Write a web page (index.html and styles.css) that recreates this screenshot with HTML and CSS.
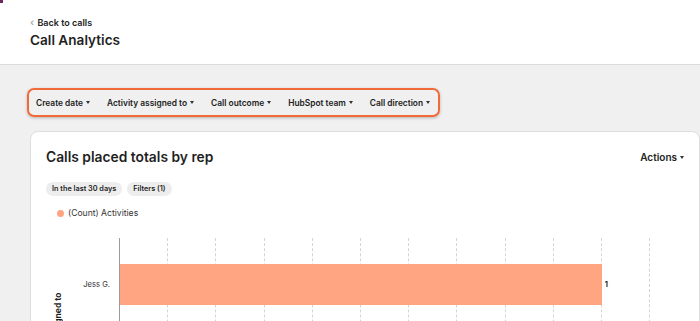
FILE: index.html
```html
<!DOCTYPE html>
<html lang="en">
<head>
    <meta charset="UTF-8">
    <meta name="viewport" content="width=device-width, initial-scale=1.0">
    <title>Call Analytics</title>
    <link rel="stylesheet" href="styles.css">
</head>
<body>
    <span class="corner-mark"></span>
    <header class="page-header">
        <a class="back-link" href="#"><span class="chev">&#8249;</span> Back to calls</a>
        <h1>Call Analytics</h1>
    </header>

    <main class="content">
        <div class="filter-bar">
            <button class="filter">Create date <span class="caret"></span></button>
            <button class="filter">Activity assigned to <span class="caret"></span></button>
            <button class="filter">Call outcome <span class="caret"></span></button>
            <button class="filter">HubSpot team <span class="caret"></span></button>
            <button class="filter">Call direction <span class="caret"></span></button>
        </div>

        <section class="card">
            <div class="card-head">
                <h2>Calls placed totals by rep</h2>
                <button class="actions">Actions <span class="caret"></span></button>
            </div>
            <div class="chips">
                <span class="chip">In the last 30 days</span>
                <span class="chip">Filters (1)</span>
            </div>
            <div class="legend"><span class="dot"></span>(Count) Activities</div>

            <div class="chart">
                <div class="y-title"><span>Activity assigned to</span></div>
                <div class="y-labels">
                    <div class="y-label">Jess G.</div>
                </div>
                <div class="plot">
                    <div class="grid">
                        <span></span><span></span><span></span><span></span><span></span><span></span>
                        <span></span><span></span><span></span><span></span><span></span>
                    </div>
                    <div class="bar-row">
                        <div class="bar" style="width: 90.91%"></div>
                        <span class="bar-value">1</span>
                    </div>
                </div>
            </div>
        </section>
    </main>
</body>
</html>
```

FILE: styles.css
```css
* {
    box-sizing: border-box;
}
body {
    margin: 0;
    font-family: Inter, "Noto Sans", sans-serif;
    color: #1f1f1f;
    background-color: #f0f0f0;
    overflow: hidden;
    height: 321px;
}
.corner-mark {
    position: absolute;
    top: 0;
    left: 0;
    width: 3px;
    height: 3px;
    background: #6b2a5e;
}
.page-header {
    background: white;
    height: 65px;
    border-bottom: 1px solid #dcdcdc;
    padding: 15px 0 0 30px;
}
.back-link {
    display: block;
    font-size: 9px;
    font-weight: 600;
    color: #222;
    text-decoration: none;
    line-height: 14px;
}
.back-link .chev {
    color: #aaa;
    font-size: 10px;
    margin-right: 1px;
}
.page-header h1 {
    margin: 1px 0 0;
    font-size: 13.6px;
    font-weight: 600;
    line-height: 18px;
}
.content {
    padding: 23px 0 0 30px;
}
.filter-bar {
    display: inline-flex;
    align-items: center;
    margin-left: -3px;
    height: 29px;
    padding: 0 8px 0 7px;
    border: 2px solid #f06a3a;
    border-radius: 7px;
    box-shadow: 0 1px 3px rgba(0, 0, 0, 0.25);
}
.filter, .actions {
    font-family: inherit;
    background: none;
    border: none;
    padding: 0;
    font-size: 8.4px;
    font-weight: 600;
    color: #222;
    cursor: pointer;
    display: inline-flex;
    align-items: center;
    gap: 3px;
}
.filter {
    margin-right: 17px;
}
.filter:last-child {
    margin-right: 0;
}
.caret {
    width: 0;
    height: 0;
    border-left: 2.5px solid transparent;
    border-right: 2.5px solid transparent;
    border-top: 3px solid #333;
}
.card {
    margin-top: 14px;
    background: white;
    border: 1px solid #dedede;
    border-radius: 8px;
    padding: 16px 15px 0 15px;
    height: 200px;
}
.card-head {
    display: flex;
    justify-content: space-between;
    align-items: center;
}
.card-head h2 {
    margin: 0;
    font-size: 13.8px;
    font-weight: 600;
    line-height: 18px;
}
.actions {
    font-size: 10px;
}
.chips {
    display: flex;
    gap: 5px;
    margin-top: 15px;
}
.chip {
    background: #ededed;
    border-radius: 7px;
    font-size: 7.3px;
    font-weight: 600;
    padding: 0 6px;
    line-height: 14px;
    margin-top: 1px;
}
.legend {
    display: flex;
    align-items: center;
    font-size: 8.6px;
    margin: 12px 0 0 11px;
    color: #333;
}
.dot {
    width: 7px;
    height: 7px;
    border-radius: 50%;
    background: #ffa581;
    margin-right: 4px;
}
.chart {
    display: flex;
    margin-top: 20px;
    height: 100px;
}
.y-title {
    width: 17px;
    padding-top: 55px;
    display: flex;
    justify-content: flex-end;
}
.y-title span {
    writing-mode: vertical-rl;
    transform: rotate(180deg);
    font-size: 8.5px;
    font-weight: 700;
    white-space: nowrap;
    height: 90px;
    text-align: right;
}
.y-labels {
    width: 47px;
    padding-top: 26px;
}
.y-label {
    height: 41px;
    line-height: 41px;
    font-size: 7.6px;
    color: #333;
    text-align: right;
}
.plot {
    position: relative;
    width: 531px;
    margin-left: 9px;
    border-left: 1.5px solid #9a9a9a;
}
.grid {
    position: absolute;
    inset: 0;
    display: flex;
}
.grid span {
    flex: 1;
    border-right: 1px dashed #d4d4d4;
}
.bar-row {
    position: relative;
    display: flex;
    align-items: center;
    margin-top: 26px;
    height: 41px;
}
.bar {
    height: 100%;
    background: #ffa581;
}
.bar-value {
    font-size: 7.5px;
    font-weight: 700;
    margin-left: 3px;
}
```
